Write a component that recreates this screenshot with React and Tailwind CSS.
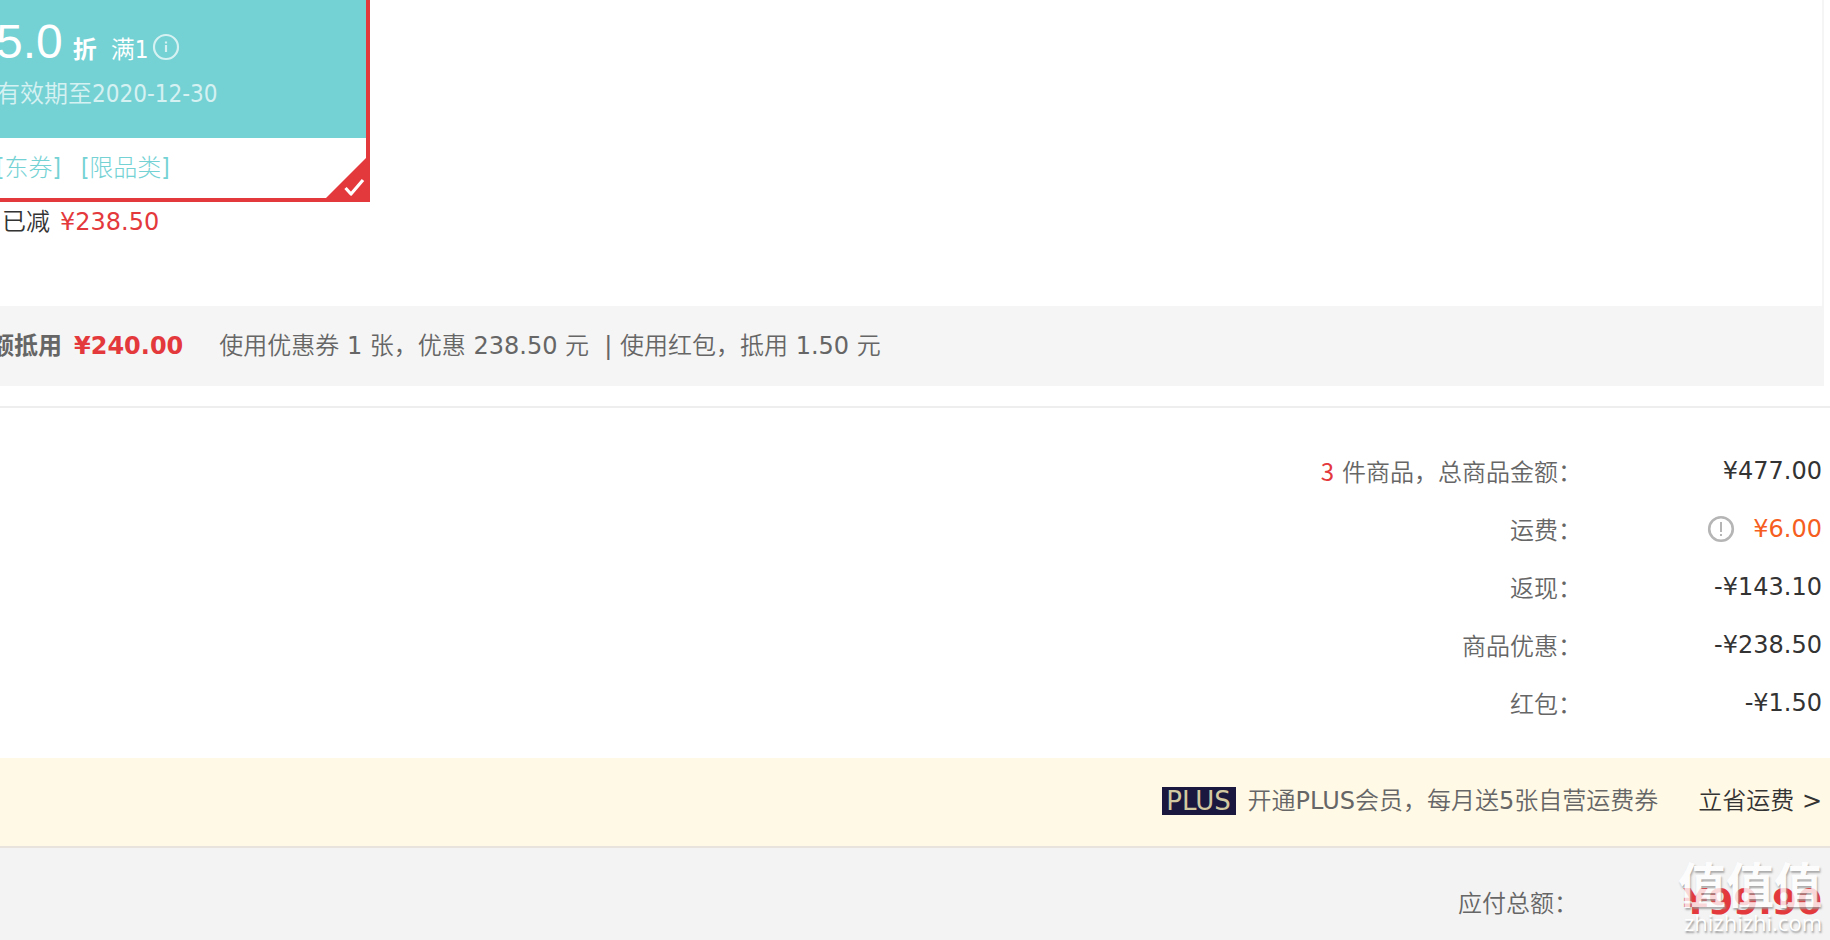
const amounts = [
  { count: '3', label: '件商品，总商品金额：', value: '¥477.00' },
  { label: '运费：', value: '¥6.00', hint: true },
  { label: '返现：', value: '-¥143.10' },
  { label: '商品优惠：', value: '-¥238.50' },
  { label: '红包：', value: '-¥1.50' },
]

function InfoIcon() {
  return (
    <svg viewBox="0 0 28 28" className="size-7 opacity-70" fill="none" stroke="currentColor" strokeWidth="2.2">
      <circle cx="14" cy="14" r="12" />
      <path d="M14 8.5v2M14 12v7" />
    </svg>
  )
}

function AlertIcon() {
  return (
    <svg viewBox="0 0 28 28" className="size-7 text-[#b5b5b5]" fill="none" stroke="currentColor" strokeWidth="2">
      <circle cx="14" cy="14" r="11.8" strokeWidth="2.6" />
      <path d="M14 7v10M14 19v2" />
    </svg>
  )
}

function Coupon() {
  return (
    <div className="relative w-[370px] border-r-4 border-b-4 border-[#e4393c] font-['DejaVu_Sans_Condensed','Noto_Sans_CJK_SC',sans-serif]">
      <div className="h-[138px] bg-[#74d2d4] pt-3 text-white">
        <div className="-ml-1 flex items-baseline">
          <span className="font-['Liberation_Sans','Noto_Sans_CJK_SC',sans-serif] text-5xl leading-[60px]">5.0</span>
          <b className="ml-2.5 font-bold">折</b>
          <span className="ml-3.5"><span className="font-[350]">满</span>1</span>
          <button aria-label="详情" className="mt-2.5 ml-1 self-center"><InfoIcon /></button>
        </div>
        <p className="-ml-1 leading-11 opacity-70"><span className="font-[350]">有效期至</span>2020-12-30</p>
      </div>
      <div className="flex h-15 items-center gap-5 bg-white text-[#74d2d4]">
        <span className="-ml-1">[<span className="font-light">东券</span>]</span>
        <span>[<span className="font-light">限品类</span>]</span>
      </div>
      <svg viewBox="0 0 48 48" className="absolute -right-1 -bottom-1 size-12" fill="none">
        <path d="M48 0V48H0Z" fill="#e4393c" />
        <path d="M23.5 34l5.5 6 12-14" stroke="#fff" strokeWidth="3.2" strokeLinejoin="round" />
      </svg>
    </div>
  )
}

export default function App() {
  return (
    <div className="overflow-hidden bg-white font-['Noto_Sans_CJK_SC',sans-serif] text-2xl text-[#666]">
      <section className="mr-[6px] font-['DejaVu_Sans','Noto_Sans_CJK_SC',sans-serif]">
        <div className="h-[306px] border-r-2 border-[#f5f5f5]">
          <Coupon />
          <p className="pl-[2px] leading-10 text-[#333]">
            <span className="font-[350]">已减</span>
            <span className="ml-2.5 text-[#e4393c]">¥238.50</span>
          </p>
        </div>
        <div className="flex h-20 items-center bg-[#f5f5f5] whitespace-pre">
          <b className="-ml-2.5">额抵用</b>
          <b className="ml-3 text-[#e4393c]">¥240.00</b>
          <p className="ml-9">
            <span className="font-[350]">使用优惠券</span> 1 <span className="font-[350]">张，优惠</span> 238.50 <span className="font-[350]">元</span>
            {'  | '}
            <span className="font-[350]">使用红包，抵用</span> 1.50 <span className="font-[350]">元</span>
          </p>
        </div>
      </section>

      <dl className="mt-5 flex h-[352px] flex-col border-t-2 border-[#eee] pt-[34px] pr-2">
        {amounts.map(({ count, label, value, hint }) => (
          <div key={label} className="flex h-[58px] items-center justify-end">
            <dt className="font-[350]">
              {count && <span className="mr-2 font-normal text-[#e4393c]">{count}</span>}
              {label}
            </dt>
            <dd className={`flex w-60 items-center justify-end gap-[18px] font-['DejaVu_Sans',sans-serif] ${hint ? 'text-[#f55e20]' : 'text-[#333]'}`}>
              {hint && <button aria-label="运费说明"><AlertIcon /></button>}
              {value}
            </dd>
          </div>
        ))}
      </dl>

      <div className="flex h-[90px] items-center justify-end border-b-2 border-[#e8e3dc] bg-[#fff9e6] pr-2 pb-[2px] font-['DejaVu_Sans','Noto_Sans_CJK_SC',sans-serif]">
        <span className="mr-3 flex h-7 w-[74px] items-center justify-center overflow-hidden bg-[#1b1840] text-[26px] text-[#d2c9a0]">PLUS</span>
        <span>
          <span className="font-[350]">开通</span>PLUS<span className="font-[350]">会员，每月送</span>5<span className="font-[350]">张自营运费券</span>
        </span>
        <a href="#plus" className="ml-10 text-[#333]">
          <span className="font-[350]">立省运费</span> &gt;
        </a>
      </div>

      <div className="relative flex h-[92px] items-center justify-end bg-[#f3f3f3] pt-4 pr-2">
        <span className="font-[350]">应付总额：</span>
        <b className="w-61 text-right font-['DejaVu_Sans',sans-serif] text-4xl text-[#e4393c]">¥99.90</b>
        <div className="absolute right-2 bottom-2 text-right whitespace-nowrap text-white text-shadow-[1px_2px_2px_#999]">
          <p className="text-5xl leading-15 font-bold opacity-80">值值值</p>
          <p className="font-['Open_Sans',sans-serif] text-[22px] leading-5">zhizhizhi.com</p>
        </div>
      </div>
    </div>
  )
}
